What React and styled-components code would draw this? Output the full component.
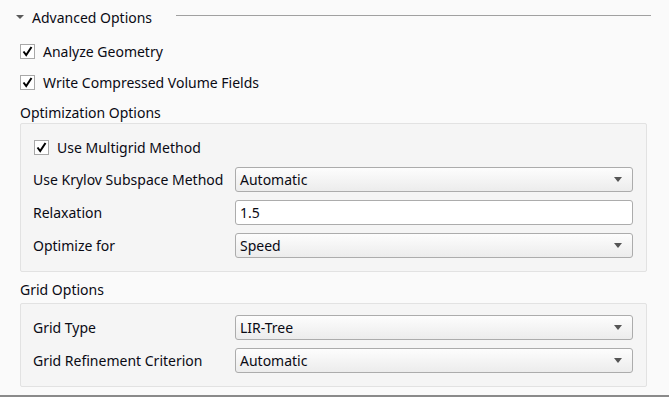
import styled, { createGlobalStyle } from "styled-components";

const GlobalStyle = createGlobalStyle`
  html, body {
    margin: 0;
    padding: 0;
    background: #fafafa;
  }
  body {
    font-family: "Noto Sans", "Liberation Sans", Arial, sans-serif;
    font-size: 14px;
    color: #0a0a14;
  }
`;

const Page = styled.div`
  width: 669px;
  height: 397px;
  box-sizing: border-box;
  background: #fafafa;
  border-bottom: 2px solid #8a8a8a;
  display: flex;
  flex-direction: column;
  overflow: hidden;
`;

const SectionHeader = styled.div`
  display: flex;
  align-items: center;
  height: 20px;
  margin-top: 7px;
  padding-left: 16px;
`;

const Caret = styled.span`
  width: 0;
  height: 0;
  border-left: 4px solid transparent;
  border-right: 4px solid transparent;
  border-top: 4px solid #5a5a5a;
  margin-right: 8px;
  margin-top: -1px;
`;

const HeaderLine = styled.div`
  flex: 1;
  height: 1px;
  background: #a0a0a0;
  margin: 0 18px 3px 24px;
`;

const Body = styled.div`
  display: flex;
  flex-direction: column;
  padding: 9px 22px 0 20px;
`;

const CheckRow = styled.label`
  display: flex;
  align-items: center;
  height: ${({ h }) => h || 31}px;
  gap: 8px;
  margin-left: ${({ indent }) => indent || 0}px;
`;

const Box = styled.span`
  width: 13px;
  height: 13px;
  border: 1px solid #a8a8a8;
  background: #fff;
  display: flex;
  align-items: center;
  justify-content: center;
  flex-shrink: 0;
`;

const GroupTitle = styled.div`
  height: 20px;
  display: flex;
  align-items: center;
  margin-top: ${({ top }) => top || 0}px;
`;

const Group = styled.div`
  border: 1px solid #e2e2e2;
  background: #f5f5f5;
  border-radius: 2px;
  margin-top: ${({ top }) => top || 0}px;
  padding: ${({ pad }) => pad};
  display: flex;
  flex-direction: column;
  gap: 8px;
`;

const FieldRow = styled.div`
  display: grid;
  grid-template-columns: 202px 1fr;
  align-items: center;
  height: 25px;
`;

const Select = styled.div`
  height: 25px;
  box-sizing: border-box;
  border: 1px solid #acacac;
  border-radius: 3px;
  background: linear-gradient(#fdfdfd, #ececec);
  display: flex;
  align-items: center;
  justify-content: space-between;
  padding: 0 10px 0 4px;
`;

const Arrow = styled.span`
  width: 0;
  height: 0;
  border-left: 4px solid transparent;
  border-right: 4px solid transparent;
  border-top: 5px solid #555;
`;

const Input = styled.div`
  height: 25px;
  box-sizing: border-box;
  border: 1px solid #acacac;
  border-radius: 3px;
  background: #fff;
  display: flex;
  align-items: center;
  padding: 0 4px;
`;

const Check = () => (
  <Box>
    <svg width="11" height="11" viewBox="0 0 11 11">
      <path d="M1.5 5.5 L4.2 9 L9.5 1" fill="none" stroke="#000" strokeWidth="2" />
    </svg>
  </Box>
);

const CheckItem = ({ label, indent, h }) => (
  <CheckRow indent={indent} h={h}>
    <Check />
    <span>{label}</span>
  </CheckRow>
);

const SelectField = ({ label, value }) => (
  <FieldRow>
    <span>{label}</span>
    <Select>
      <span>{value}</span>
      <Arrow />
    </Select>
  </FieldRow>
);

const App = () => (
  <Page>
    <GlobalStyle />
    <SectionHeader>
      <Caret />
      <span>Advanced Options</span>
      <HeaderLine />
    </SectionHeader>
    <Body>
      <CheckItem label="Analyze Geometry" />
      <CheckItem label="Write Compressed Volume Fields" />
      <GroupTitle top={4}>Optimization Options</GroupTitle>
      <Group top={1} pad="12px 13px 13px 12px">
        <CheckItem label="Use Multigrid Method" indent={1} h={23} />
        <SelectField label="Use Krylov Subspace Method" value="Automatic" />
        <FieldRow>
          <span>Relaxation</span>
          <Input>1.5</Input>
        </FieldRow>
        <SelectField label="Optimize for" value="Speed" />
      </Group>
      <GroupTitle top={7}>Grid Options</GroupTitle>
      <Group top={4} pad="11px 13px 13px 12px">
        <SelectField label="Grid Type" value="LIR-Tree" />
        <SelectField label="Grid Refinement Criterion" value="Automatic" />
      </Group>
    </Body>
  </Page>
);

export default App;
